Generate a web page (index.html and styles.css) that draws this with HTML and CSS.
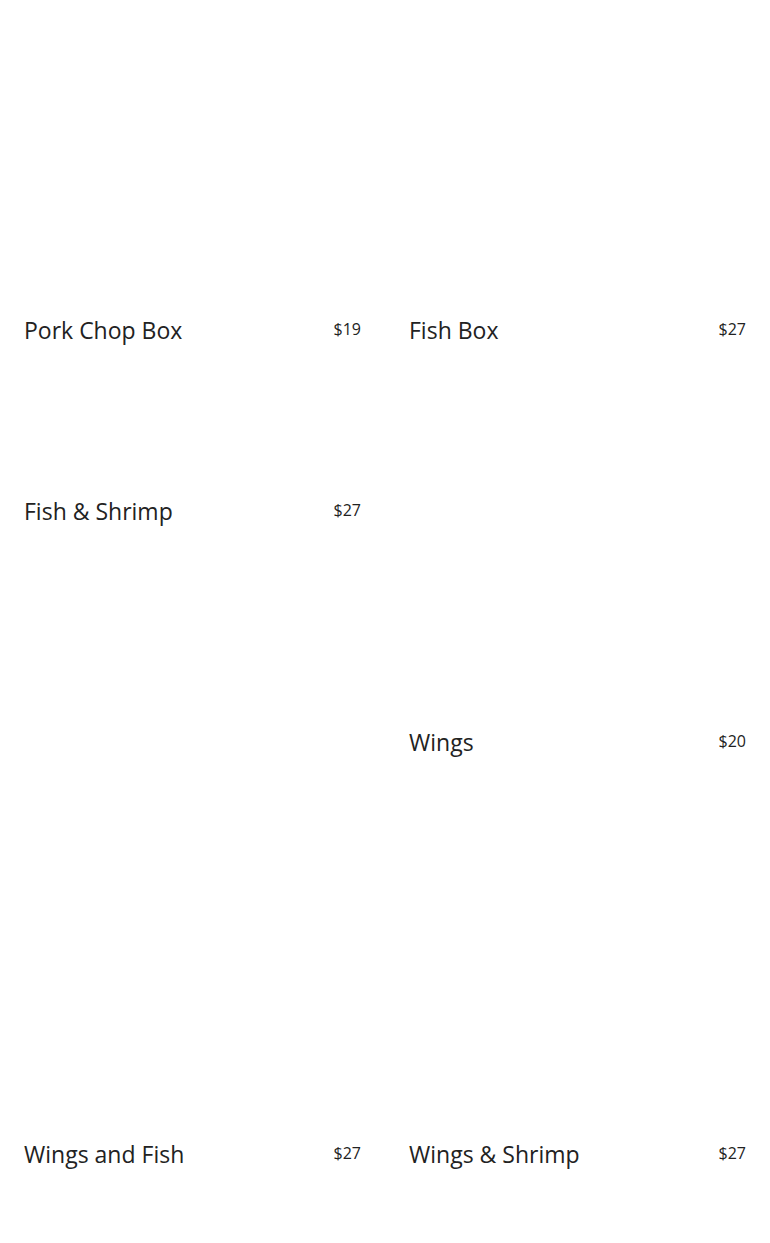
FILE: index.html
```html
<!DOCTYPE html>
<html lang="en">
<head>
<meta charset="utf-8">
<title>Menu</title>
<link rel="stylesheet" href="styles.css">
</head>
<body>
<main class="menu">
  <div class="col">
    <article class="item">
      <div class="media media-a"></div>
      <div class="head"><h3 class="name">Pork Chop Box</h3><span class="price">$19</span></div>
    </article>
    <article class="item">
      <div class="media media-b"></div>
      <div class="head"><h3 class="name">Fish &amp; Shrimp</h3><span class="price">$27</span></div>
    </article>
    <article class="item">
      <div class="media media-c"></div>
      <div class="head"><h3 class="name">Wings and Fish</h3><span class="price">$27</span></div>
    </article>
  </div>
  <div class="col">
    <article class="item">
      <div class="media media-a"></div>
      <div class="head"><h3 class="name">Fish Box</h3><span class="price">$27</span></div>
    </article>
    <article class="item">
      <div class="media media-d"></div>
      <div class="head"><h3 class="name">Wings</h3><span class="price">$20</span></div>
    </article>
    <article class="item">
      <div class="media media-d"></div>
      <div class="head"><h3 class="name">Wings &amp; Shrimp</h3><span class="price">$27</span></div>
    </article>
  </div>
</main>
</body>
</html>
```

FILE: styles.css
```css
html, body {
  margin: 0;
  padding: 0;
  background: #ffffff;
}
body {
  font-family: "Open Sans", "Noto Sans", sans-serif;
  color: #222222;
}
.menu {
  display: grid;
  grid-template-columns: 1fr 1fr;
  column-gap: 48px;
  padding: 0 24px;
  height: 1243px;
  box-sizing: border-box;
}
.col {
  display: flex;
  flex-direction: column;
}
.item {
  display: flex;
  flex-direction: column;
}
.media { width: 100%; }
.media-a { height: 318px; }
.media-b { height: 151px; }
.media-c { height: 613px; }
.media-d { height: 382px; }
.head {
  display: flex;
  justify-content: space-between;
  align-items: flex-start;
  height: 30px;
}
.name {
  margin: 0;
  font-size: 23px;
  font-weight: 400;
  line-height: 24px;
  padding-top: 0;
}
.price {
  font-size: 16px;
  line-height: 20px;
  padding-top: 1px;
}
```
